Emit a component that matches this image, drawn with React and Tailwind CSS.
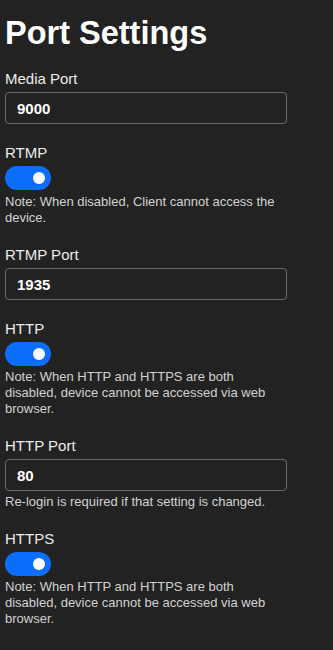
import { useState } from "react";

function Toggle({ on, onChange }) {
    return (
        <button
            onClick={() => onChange(!on)}
            className={"relative block w-[46px] h-[24px] rounded-full " + (on ? "bg-[#0d6efd]" : "bg-[#555]")}
        >
            <span
                className={"absolute top-[6px] w-[12px] h-[12px] rounded-full bg-white " + (on ? "left-[28px]" : "left-[6px]")}
            ></span>
        </button>
    );
}

function Label({ children }) {
    return <div className="text-[15px] leading-[18px] text-[#ececec] mb-[4px]">{children}</div>;
}

function Note({ children, className = "" }) {
    return <div className={"text-[13px] leading-[16px] text-[#d2d2d2] " + className}>{children}</div>;
}

function PortInput({ value }) {
    return (
        <input
            defaultValue={value}
            className="block w-full h-[32px] px-[11px] rounded-[4px] border border-[#6b6b6b] bg-[#222222] text-white text-[15px] font-bold outline-none"
        />
    );
}

export default function App() {
    const [rtmp, setRtmp] = useState(true);
    const [http, setHttp] = useState(true);
    const [https, setHttps] = useState(true);

    return (
        <div className="min-h-[650px] bg-[#222222] text-white pt-[13px] pl-[5px]" style={{ fontFamily: '"Liberation Sans", Arial, sans-serif' }}>
            <h1 className="text-[32.5px] leading-[40px] font-bold text-white">Port Settings</h1>
            <div className="w-[282px] flex flex-col gap-[20px] mt-[17px]">
                <div>
                    <Label>Media Port</Label>
                    <PortInput value="9000" />
                </div>
                <div>
                    <Label>RTMP</Label>
                    <Toggle on={rtmp} onChange={setRtmp} />
                    <Note className="mt-[4px]">Note: When disabled, Client cannot access the device.</Note>
                </div>
                <div>
                    <Label>RTMP Port</Label>
                    <PortInput value="1935" />
                </div>
                <div>
                    <Label>HTTP</Label>
                    <Toggle on={http} onChange={setHttp} />
                    <Note className="mt-[3px]">Note: When HTTP and HTTPS are both disabled, device cannot be accessed via web browser.</Note>
                </div>
                <div>
                    <Label>HTTP Port</Label>
                    <PortInput value="80" />
                    <Note className="mt-[3px]">Re-login is required if that setting is changed.</Note>
                </div>
                <div>
                    <Label>HTTPS</Label>
                    <Toggle on={https} onChange={setHttps} />
                    <Note className="mt-[3px]">Note: When HTTP and HTTPS are both disabled, device cannot be accessed via web browser.</Note>
                </div>
            </div>
        </div>
    );
}
